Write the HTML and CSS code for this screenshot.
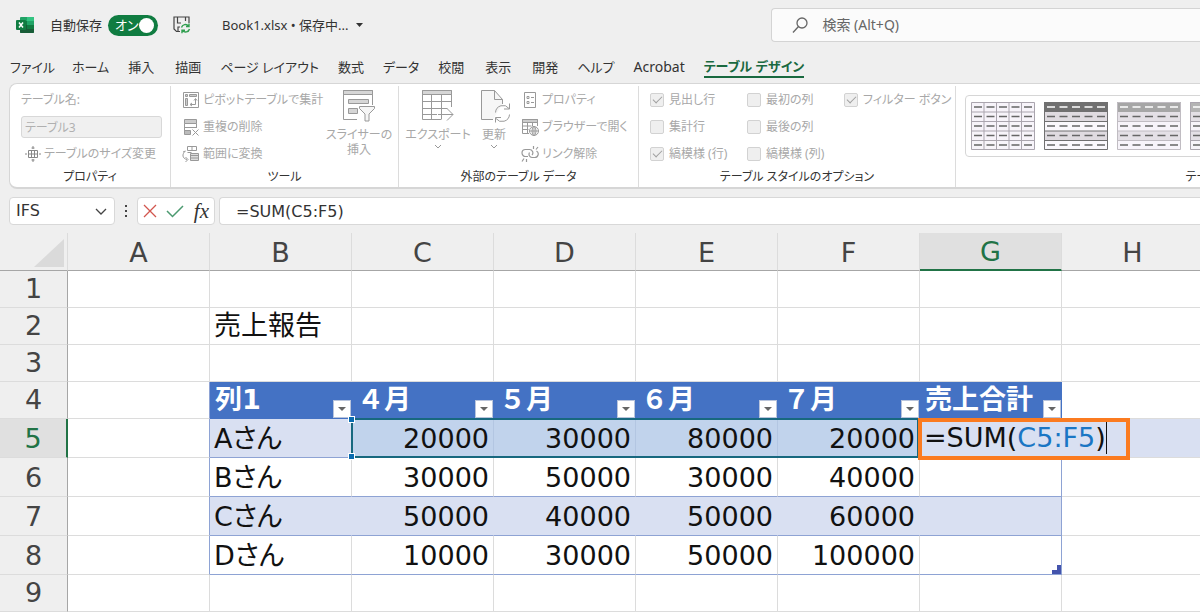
FILE: index.html
```html
<!DOCTYPE html>
<html lang="ja">
<head>
<meta charset="utf-8">
<meta name="viewport" content="width=device-width, initial-scale=1">
<title>Book1.xlsx</title>
<link rel="stylesheet" href="styles.css">
</head>
<body>
<header class="titlebar">
  <div class="quick">
    <svg class="app-icon" width="18" height="18" viewBox="0 0 18 18" aria-hidden="true">
      <rect x="4" y="1" width="14" height="16" rx="1" fill="#21a366"/>
      <path d="M11 1h6a1 1 0 0 1 1 1v3h-7z" fill="#33c481"/>
      <path d="M4 5h7v4H4z" fill="#107c41"/><path d="M4 9h14v7a1 1 0 0 1-1 1H5a1 1 0 0 1-1-1z" fill="#185c37"/>
      <path d="M11 9h7v4h-7z" fill="#107c41"/>
      <rect x="0" y="4" width="10" height="10" rx="1" fill="#107c41"/>
      <path d="M3 6.500l4 5M7 6.500l-4 5" stroke="#fff" stroke-width="1.500"/>
    </svg>
    <span class="autosave-label" id="autosave">自動保存</span>
    <button class="toggle" type="button" role="switch" aria-checked="true" aria-labelledby="autosave">オン<span class="knob"></span></button>
    <button class="plain save" type="button" aria-label="保存">
      <svg width="18" height="18" viewBox="0 0 18 18" fill="none" stroke="#444" stroke-width="1.200">
        <path d="M7 15.500H3.500L1 13V1h15v6M4.500 1v6H8M12.500 1v4M5 15.500V11h2"/>
        <g stroke="#2f9e4f" stroke-width="1.400"><path d="M8.500 11.500a4 4 0 0 1 7-1.500M16 7.500V10.500h-3M16.500 13a4 4 0 0 1-7 1.500M9 17.300v-3h3"/></g>
      </svg>
    </button>
    <button class="plain filename" type="button">Book1.xlsx • 保存中...
      <svg width="7" height="4" viewBox="0 0 7 4" aria-hidden="true"><path d="M0 0h7L3.500 4z" fill="#333"/></svg>
    </button>
  </div>
  <label class="search">
    <svg width="16" height="16" viewBox="0 0 16 16" fill="none" stroke="#666" stroke-width="1.300" aria-hidden="true"><circle cx="10" cy="6" r="5"/><path d="M6.500 9.500L1 15.500"/></svg>
    <input type="search" placeholder="検索 (Alt+Q)" aria-label="検索">
  </label>
</header>

<nav class="tabs">
  <button type="button" class="kana">ファイル</button>
  <button type="button" class="kana">ホーム</button>
  <button type="button">挿入</button>
  <button type="button">描画</button>
  <button type="button" class="kana">ページ レイアウト</button>
  <button type="button">数式</button>
  <button type="button" class="kana">データ</button>
  <button type="button">校閲</button>
  <button type="button">表示</button>
  <button type="button">開発</button>
  <button type="button" class="kana">ヘルプ</button>
  <button type="button" class="latin">Acrobat</button>
  <button type="button" class="kana active">テーブル デザイン</button>
</nav>

<section class="ribbon">
  <div class="group g-props">
    <div class="rows">
      <label for="tname">テーブル名:</label>
      <div class="row"><input id="tname" type="text" value="テーブル3" disabled></div>
      <button type="button" class="cmd resize" disabled>
        <svg width="16" height="16" viewBox="0 0 16 16" fill="none" stroke="#888"><path d="M3.500 4.500h9v7h-9zM3.500 8h9M6.500 4.500v7M9.500 4.500v7"/><path d="M8 0v3M8 13v3M0 8h2M14 8h2M6.500 2h3M6.500 14h3"/></svg>テーブルのサイズ変更</button>
    </div>
    <h2>プロパティ</h2>
  </div>

  <div class="group g-tools">
    <div class="body">
      <div class="rows">
        <button type="button" class="cmd" disabled>
          <svg width="18" height="18" viewBox="0 0 18 18" fill="none" stroke="#999"><path d="M1.500 1.500h15v15h-15z"/><path d="M3.500 3.500h2v2h-2zM7.500 3.500h7v2h-7zM3.500 7.500h2v7h-2z" fill="#ccc"/><path d="M13.500 8v5.500H8.500M12 9.500l1.500-2 1.500 2M10 12l-2 1.500 2 1.500"/></svg>ピボットテーブルで集計</button>
        <button type="button" class="cmd" disabled>
          <svg width="18" height="18" viewBox="0 0 18 18" fill="none" stroke="#999"><path d="M2.500 1.500h12v4h-12z" fill="#ccc"/><path d="M2.500 5.500V16M14.500 5.500V10M2.500 9.500h12"/><path d="M2.500 12.500h6v4h-6z" fill="#bbb"/><path d="M10.500 11.500l6 6M16.500 11.500l-6 6"/></svg>重複の削除</button>
        <button type="button" class="cmd" disabled>
          <svg width="18" height="18" viewBox="0 0 18 18" fill="none" stroke="#999"><path d="M5.500 1.500h9v4h-9zM10 1.500v4M5.500 7.500h4"/><path d="M8.500 8.500h8v7h-8zM8.500 10.500h8M8.500 13h8" fill="#ddd"/><path d="M3 6.500C0 9 0 13.500 5 14.500M3.500 12l2.500 2.500L3.500 17M1 7l2.500-1"/></svg>範囲に変換</button>
      </div>
      <button type="button" class="big slicer" disabled>
        <svg width="34" height="34" viewBox="0 0 34 34" fill="none" stroke="#999"><path d="M15 30.500H1.500v-29h29V16"/><path d="M1.500 1.500h29v4h-29z" fill="#d6d6d6"/><path d="M6.500 10.500h20v4h-20zM6.500 19.500h9v5h-9z" fill="#d6d6d6"/><path d="M17.500 17.500h15v2l-5.500 5.500v7h-4v-7l-5.500-5.500z" fill="#f6f6f6"/></svg>
        <span>スライサーの<br>挿入</span></button>
    </div>
    <h2>ツール</h2>
  </div>

  <div class="group g-ext">
    <div class="body">
      <button type="button" class="big export" disabled>
        <svg width="34" height="34" viewBox="0 0 34 34" fill="none" stroke="#999"><path d="M20 30.500H1.500v-29h29V18M1.500 12.500h29M1.500 19.500h25M1.500 25.500H16M10.500 5v25.500M20.500 5v25.500"/><path d="M1.500 1.500h29v4h-29z" fill="#d6d6d6"/><path d="M17 25.500h15M26 19.500l6 6-6 6"/></svg>
        <span>エクスポート</span>
        <svg width="8" height="5" viewBox="0 0 8 5" fill="none" stroke="#999"><path d="M1 1l3 3 3-3"/></svg></button>
      <button type="button" class="big update" disabled>
        <svg width="34" height="34" viewBox="0 0 34 34" fill="none" stroke="#999"><path d="M16 30.500H4.500v-29h13l8 9V15" fill="#f6f6f6"/><path d="M17.500 1.500v9h8"/><path d="M18.500 23.500a7.500 7.500 0 0 1 13.500-4M32.500 14.500v5.500H27M32.500 25.500a7.500 7.500 0 0 1-13.500 4M18.500 33.500V28.500H24" fill="none"/></svg>
        <span>更新</span>
        <svg width="8" height="5" viewBox="0 0 8 5" fill="none" stroke="#999"><path d="M1 1l3 3 3-3"/></svg></button>
      <div class="rows">
        <button type="button" class="cmd" disabled>
          <svg width="18" height="18" viewBox="0 0 18 18" fill="none" stroke="#999"><path d="M3.500 1.500h11v15h-11z"/><path d="M6 5.500h2v2H6zM6 10.500h2v2H6zM10 6.500h3M10 11.500h3"/></svg>プロパティ</button>
        <button type="button" class="cmd" disabled>
          <svg width="18" height="18" viewBox="0 0 18 18" fill="none" stroke="#999"><path d="M8 15.500H1.500v-14h15V8M1.500 8h9M1.500 11.500h6M6.500 4v11.500M11.500 4v4"/><path d="M1.500 1.500h15v3h-15z" fill="#ccc"/><circle cx="13" cy="13" r="4.500"/><path d="M8.500 13h9M13 8.500v9"/><ellipse cx="13" cy="13" rx="2" ry="4.500"/></svg>ブラウザーで開く</button>
        <button type="button" class="cmd" disabled>
          <svg width="18" height="18" viewBox="0 0 18 18" fill="none" stroke="#999" stroke-width="1.200"><path d="M7 11.500H4.500a3.500 3.500 0 0 1 0-7H8.500a3.300 3.300 0 0 1 2.500 5.500M8.500 7.500a3.300 3.300 0 0 0 2.500 5H13.500a3.500 3.500 0 0 0 2-6.500M12.500 4V1M15 4.500l2-2.500M3 13.500l-2 3M5.500 14v3"/></svg>リンク解除</button>
      </div>
    </div>
    <h2>外部のテーブル データ</h2>
  </div>

  <div class="group g-opts">
    <div class="checks">
      <label><input type="checkbox" checked disabled>見出し行</label>
      <label><input type="checkbox" disabled>最初の列</label>
      <label><input type="checkbox" checked disabled>フィルター ボタン</label>
      <label><input type="checkbox" disabled>集計行</label>
      <label><input type="checkbox" disabled>最後の列</label>
      <span></span>
      <label><input type="checkbox" checked disabled>縞模様 (行)</label>
      <label><input type="checkbox" disabled>縞模様 (列)</label>
    </div>
    <h2>テーブル スタイルのオプション</h2>
  </div>

  <div class="group g-styles">
    <svg class="defs" width="0" height="0" aria-hidden="true">
      <symbol id="dashes" viewBox="0 0 64 48"><path d="M3 5h58M3 14.500h58M3 24h58M3 33.500h58M3 43h58" stroke-width="1.300" stroke-dasharray="8 4.500"/></symbol>
      <symbol id="dashrow" viewBox="0 0 64 10"><path d="M3 5h58" stroke="#fff" stroke-width="1.500" stroke-dasharray="8 4.500"/></symbol>
    </svg>
    <div class="gallery">
      <button type="button" aria-label="スタイル 1"><svg width="64" height="48" viewBox="0 0 64 48"><path d="M0 0h64v48H0z" fill="#f7f4fa"/><path d="M.5.500h63v47H.5zM0 10h64M0 19.500h64M0 29h64M0 38.500h64M13 0v48M25.500 0v48M38 0v48M50.500 0v48" fill="none" stroke="#aaa5ae"/><use href="#dashes" width="64" height="48" stroke="#666"/></svg></button>
      <button type="button" aria-label="スタイル 2"><svg width="64" height="48" viewBox="0 0 64 48"><path d="M0 0h64v48H0z" fill="#faf8fc"/><path d="M0 10h64v9.500H0zM0 29h64v9.500H0z" fill="#dfdbe0"/><use href="#dashes" width="64" height="48" stroke="#666"/><path d="M0 0h64v10H0z" fill="#707070"/><use href="#dashrow" width="64" height="10"/><path d="M.5.500h63v47H.5zM0 19.500h64M0 29h64M0 38.500h64" fill="none" stroke="#707070"/></svg></button>
      <button type="button" aria-label="スタイル 3"><svg width="64" height="48" viewBox="0 0 64 48"><path d="M0 0h64v48H0z" fill="#f7f4fa"/><path d="M0 10h64v9.500H0zM0 29h64v9.500H0z" fill="#e4e0e6"/><use href="#dashes" width="64" height="48" stroke="#666"/><path d="M0 0h64v10H0z" fill="#a6a6a6"/><use href="#dashrow" width="64" height="10"/><path d="M.5.500h63v47H.5zM0 19.500h64M0 29h64M0 38.500h64" fill="none" stroke="#c0bcc2"/></svg></button>
      <button type="button" aria-label="スタイル 4"><svg width="64" height="48" viewBox="0 0 64 48"><path d="M0 0h64v48H0z" fill="#f7f4fa"/><path d="M0 10h64v9.500H0zM0 29h64v9.500H0z" fill="#e4e0e6"/><use href="#dashes" width="64" height="48" stroke="#666"/><path d="M0 0h64v10H0z" fill="#b4b4b4"/><use href="#dashrow" width="64" height="10"/><path d="M.5.500h63v47H.5zM0 19.500h64M0 29h64M0 38.500h64M13 0v48M25.500 0v48M38 0v48M50.500 0v48" fill="none" stroke="#aaa5ae"/></svg></button>
    </div>
    <h2>テーブル スタイル</h2>
  </div>
</section>

<section class="formula-bar">
  <select class="namebox" aria-label="名前ボックス"><option>IFS</option></select>
  <svg class="grip" width="4" height="12" viewBox="0 0 4 12" aria-hidden="true"><path d="M1 0h2v2H1zM1 5h2v2H1zM1 10h2v2H1z" fill="#444"/></svg>
  <div class="fx">
    <button type="button" class="plain" aria-label="キャンセル"><svg width="14" height="14" viewBox="0 0 14 14" fill="none" stroke="#d2564e" stroke-width="1.300"><path d="M1 1l12 12M13 1L1 13"/></svg></button>
    <button type="button" class="plain" aria-label="入力"><svg width="18" height="14" viewBox="0 0 18 14" fill="none" stroke="#4c9a70" stroke-width="1.500"><path d="M1 7l5.500 5.500L17 2"/></svg></button>
    <button type="button" class="plain fn" aria-label="関数の挿入">fx</button>
  </div>
  <input class="formula" type="text" value="=SUM(C5:F5)" aria-label="数式バー">
</section>

<main class="sheet">
  <table>
    <colgroup><col class="c-head"><col><col><col><col><col><col><col><col></colgroup>
    <thead>
      <tr><th class="corner"><svg width="30" height="28" viewBox="0 0 30 28" aria-hidden="true"><path d="M30 0v28H0z" fill="#dadada"/></svg></th><th>A</th><th>B</th><th>C</th><th>D</th><th>E</th><th>F</th><th class="sel">G</th><th>H</th></tr>
    </thead>
    <tbody>
      <tr><th>1</th><td></td><td></td><td></td><td></td><td></td><td></td><td></td><td></td></tr>
      <tr><th>2</th><td></td><td>売上報告</td><td></td><td></td><td></td><td></td><td></td><td></td></tr>
      <tr><th>3</th><td></td><td></td><td></td><td></td><td></td><td></td><td></td><td></td></tr>
      <tr class="titles"><th>4</th><td class="edge"></td>
        <td class="h">列1<button type="button" class="filter" aria-label="列1 フィルター"></button></td>
        <td class="h">４月<button type="button" class="filter" aria-label="4月 フィルター"></button></td>
        <td class="h">５月<button type="button" class="filter" aria-label="5月 フィルター"></button></td>
        <td class="h">６月<button type="button" class="filter" aria-label="6月 フィルター"></button></td>
        <td class="h">７月<button type="button" class="filter" aria-label="7月 フィルター"></button></td>
        <td class="h">売上合計<button type="button" class="filter" aria-label="売上合計 フィルター"></button></td>
        <td></td></tr>
      <tr class="data band current"><th class="sel">5</th><td class="edge"></td><td class="t name">Aさん</td>
        <td class="t pick">20000<span class="range"><i></i><i></i></span></td><td class="t pick">30000</td><td class="t pick">80000</td><td class="t pick">20000</td>
        <td class="t last"><div class="editor" role="textbox" aria-label="G5">=SUM(<span class="ref">C5:F5</span>)<span class="caret"></span></div></td><td class="spill"></td></tr>
      <tr class="data"><th>6</th><td class="edge"></td><td class="t name">Bさん</td><td class="t">30000</td><td class="t">50000</td><td class="t">30000</td><td class="t">40000</td><td class="t last"></td><td></td></tr>
      <tr class="data band"><th>7</th><td class="edge"></td><td class="t name">Cさん</td><td class="t">50000</td><td class="t">40000</td><td class="t">50000</td><td class="t">60000</td><td class="t last"></td><td></td></tr>
      <tr class="data"><th>8</th><td class="edge"></td><td class="t name">Dさん</td><td class="t">10000</td><td class="t">30000</td><td class="t">50000</td><td class="t">100000</td>
        <td class="t last"><svg class="corner-grip" width="9" height="9" viewBox="0 0 9 9" aria-hidden="true"><path d="M5 0h4v9H0V5h5z" fill="#4454ad"/></svg></td><td></td></tr>
      <tr><th>9</th><td></td><td></td><td></td><td></td><td></td><td></td><td></td><td></td></tr>
    </tbody>
  </table>
</main>
</body>
</html>
```

FILE: styles.css
```css
* { box-sizing: border-box; }

html, body { height: 100%; }

body {
  margin: 0;
  display: flex;
  flex-direction: column;
  overflow: hidden;
  background: #efefef;
  color: #333;
  font-family: "Noto Sans", "Noto Sans CJK JP", sans-serif;
  font-size: 13px;
  line-height: 18px;
  font-feature-settings: "palt";
}

button, input, select {
  font: inherit;
  font-feature-settings: inherit;
  color: inherit;
  margin: 0;
}

button { padding: 0; border: 0; background: none; }
svg { display: block; flex: none; }

.plain { display: flex; align-items: center; }

/* Title bar */
.titlebar {
  display: grid;
  grid-template-columns: 9fr 5fr;
  align-items: center;
  height: 50px;
  flex: none;
}
.quick { display: flex; align-items: center; padding-left: 16px; }
.autosave-label { margin: 0 6px 0 16px; }
.toggle {
  display: flex;
  align-items: center;
  justify-content: space-between;
  width: 50px;
  height: 21px;
  padding: 0 4px 0 7px;
  border-radius: 11px;
  background: #107c41;
  color: #fff;
}
.knob { width: 15px; height: 15px; border-radius: 50%; background: #fff; }
.save { margin-left: 15px; }
.filename { margin-left: 31px; gap: 7px; }
.search {
  display: flex;
  align-items: center;
  gap: 14px;
  height: 34px;
  padding-left: 20px;
  border: 1px solid #d4d4d4;
  border-right: 0;
  border-radius: 4px 0 0 4px;
  background: #fbfbfb;
}
.search input {
  flex: 1;
  min-width: 0;
  border: 0;
  outline: 0;
  padding: 0;
  background: none;
  font-size: 14px;
}
.search input::placeholder { color: #666; opacity: 1; }

/* Tabs */
.tabs {
  display: flex;
  align-items: flex-start;
  gap: 21px;
  height: 33px;
  padding: 6px 12px 0;
  flex: none;
}
.tabs button { height: 22px; white-space: nowrap; }
.tabs .kana { margin: 0 -2px; }
.tabs .latin { font-size: 14px; }
.tabs .active {
  color: #19693f;
  font-weight: 700;
  border-bottom: 2px solid #19693f;
}

/* Ribbon */
.ribbon {
  display: flex;
  flex: none;
  margin-left: 9px;
  padding: 2px 0 0;
  border: 1px solid #d6d6d6;
  border-right: 0;
  border-bottom-width: 2px;
  border-radius: 8px 0 0 8px;
  background: #fff;
  overflow: hidden;
  font-size: 12px;
  color: #a8a8a8;
}
.group {
  display: flex;
  flex-direction: column;
  flex: none;
  position: relative;
  white-space: nowrap;
}
.group + .group { border-left: 1px solid #dcdcdc; }
.group h2 {
  margin: auto 0 0;
  height: 20px;
  font-size: 12px;
  line-height: 20px;
  font-weight: 400;
  text-align: center;
  color: #333;
}
.rows { display: grid; grid-template-rows: repeat(3, 27px); align-items: center; }
.body { display: flex; }
.cmd { display: flex; align-items: center; gap: 3px; color: inherit; }
.g-props { width: 160px; }
.g-props .rows { padding: 0 8px 0 11px; }
.g-props .row { display: flex; }
.g-props input {
  width: 100%;
  height: 22px;
  padding: 0 3px;
  border: 1px solid #d8d8d8;
  border-radius: 3px;
  background: #f0f0f0;
  color: #b0b0b0;
}
.resize { padding-left: 4px; }
.g-tools { width: 228px; }
.g-tools .rows { padding-left: 11px; width: 156px; }
.big {
  display: flex;
  flex-direction: column;
  align-items: center;
  gap: 2px;
  padding-top: 3px;
  color: inherit;
  line-height: 15px;
}
.big span { padding-top: 2px; }
.slicer { width: 64px; }
.g-ext { width: 240px; }
.export { width: 78px; }
.update { width: 34px; }
.g-ext .rows { padding-left: 10px; }
.g-opts { width: 317px; }
.checks {
  display: grid;
  grid-template-columns: 97px 97px 1fr;
  grid-template-rows: repeat(3, 27px);
  align-items: center;
  padding-left: 11px;
}
.checks label { display: flex; align-items: center; gap: 5px; }
.checks input {
  appearance: none;
  width: 14px;
  height: 14px;
  border: 1px solid #d2d2d2;
  border-radius: 2px;
  background: #efefef;
  display: grid;
  place-items: center;
}
.checks input:checked::before {
  content: "";
  width: 8px;
  height: 4px;
  margin-bottom: 2px;
  border: solid #a0a0a0;
  border-width: 0 0 1px 1px;
  rotate: -45deg;
}
.g-styles { width: 550px; }
.defs { position: absolute; }
.gallery {
  display: flex;
  gap: 9px;
  margin: 9px 0 0 9px;
  padding: 6px 5px;
  border: 1px solid #d6d6d6;
  border-radius: 4px;
}

/* Formula bar */
.formula-bar {
  display: flex;
  align-items: center;
  flex: none;
  height: 44px;
  padding: 0 0 0 9px;
  font-family: "DejaVu Sans", sans-serif;
  font-size: 16px;
}
.namebox, .fx, .formula {
  height: 28px;
  border: 1px solid #d8d8d8;
  border-radius: 4px;
  background: #fff;
}
.namebox {
  appearance: none;
  width: 106px;
  padding: 0 6px;
  background: #fff url("data:image/svg+xml,%3Csvg xmlns='http://www.w3.org/2000/svg' width='12' height='7' fill='none' stroke='%23444' stroke-width='1.3'%3E%3Cpath d='M1 1l5 5 5-5'/%3E%3C/svg%3E") no-repeat right 7px center;
}
.grip { margin: 0 9px; }
.fx {
  display: flex;
  align-items: center;
  justify-content: space-between;
  width: 78px;
  padding: 0 5px;
}
.fn {
  font: italic 400 21px/20px "Liberation Serif", serif;
}
.formula {
  flex: 1;
  min-width: 0;
  margin-left: 4px;
  padding: 0 16px;
  border-right: 0;
  border-radius: 4px 0 0 4px;
  outline: 0;
}

/* Sheet */
.sheet {
  flex: 1;
  overflow: hidden;
  min-height: 0;
  background: #fff;
  color: #111;
  font-family: "DejaVu Sans", "Noto Sans CJK JP", sans-serif;
  font-size: 27px;
  line-height: 34px;
}
table { width: 1204px; table-layout: fixed; border-collapse: separate; border-spacing: 0; }
.c-head { width: 68px; }
th, td {
  height: 37px;
  padding: 0;
  border: 0 solid #dcdcdc;
  border-width: 0 1px 1px 0;
  position: relative;
  white-space: nowrap;
}
td { padding: 0 4px; }
th { background: #efefef; color: #444; font-weight: 400; }
thead th { padding-top: 2px; border-bottom-color: #a6a6a6; }
tbody th { border-right-color: #a6a6a6; }
thead .sel { background: #e0e0e0; color: #217346; border-bottom: 2px solid #217346; }
tbody .sel { background: #e0e0e0; color: #217346; border-right: 2px solid #217346; }
.corner svg { margin: 0 3px 0 auto; }
.data > * { height: 39px; padding-top: 2px; }
.h {
  background: #4472c4;
  border-color: #4472c4;
  color: #fff;
  font-weight: 700;
  padding: 0 5px;
  font-feature-settings: normal;
}
.filter {
  position: absolute;
  right: 0;
  bottom: 0;
  width: 18px;
  height: 18px;
  border: 1px solid #b8c4dc;
  background: #fff;
  display: grid;
  place-items: center;
}
.filter::before {
  content: "";
  border: 4px solid transparent;
  border-top-color: #666;
  border-bottom: 0;
}
.t { text-align: right; border-bottom-color: #8ea3d4; }
.name { text-align: left; }
.edge { border-right-color: #8ea3d4; }
.last { border-right-color: #8ea3d4; }
.band .t { background: #d9e0f2; border-right-color: #d9e0f2; }
.band .last { border-right-color: #8ea3d4; }
.band .pick { background: #c1d3ec; border-right-color: #b3c6e2; }
.band.current .spill { background: #d9e0f2; }
.range {
  position: absolute;
  z-index: 1;
  left: -1px;
  top: -1px;
  width: calc(400% + 4px);
  height: 40px;
  border: 2px solid #17687f;
}
.range i {
  position: absolute;
  left: -5px;
  width: 7px;
  height: 7px;
  border: 1px solid #fff;
  background: #0a6bb0;
}
.range i:first-child { top: -4px; }
.range i:last-child { bottom: -4px; }
.editor {
  position: absolute;
  z-index: 2;
  left: -2px;
  top: -1px;
  display: flex;
  align-items: center;
  width: 212px;
  height: 42px;
  padding: 0 0 2px 2px;
  border: 4px solid #fb7b20;
  background: #d9e0f2;
}
.ref { color: #1a76c4; }
.caret { width: 1px; height: 32px; background: #111; }
.corner-grip { position: absolute; right: 0; bottom: 0; }
```
